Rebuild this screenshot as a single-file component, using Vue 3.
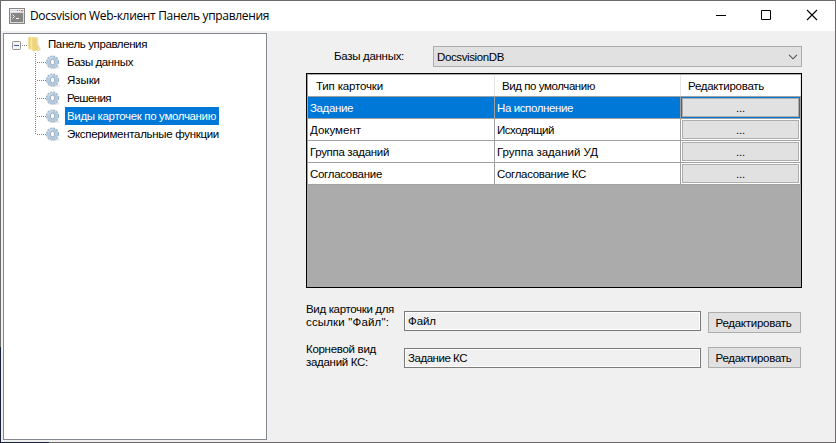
<script setup>
const nodes = [
  { text: 'Базы данных', width: 66 },
  { text: 'Языки', width: 33 },
  { text: 'Решения', width: 44 },
  { text: 'Виды карточек по умолчанию', width: 149, selected: true },
  { text: 'Экспериментальные функции', width: 152 },
]
const rows = [
  { type: 'Задание', tw: 43, view: 'На исполнение', vw: 76, selected: true },
  { type: 'Документ', tw: 51, view: 'Исходящий', vw: 57 },
  { type: 'Группа заданий', tw: 79, view: 'Группа заданий УД', vw: 101 },
  { type: 'Согласование', tw: 72, view: 'Согласование КС', vw: 89 },
]
const forms = [
  { lines: [['Вид карточки для', 88], ['ссылки "Файл":', 83]], value: 'Файл', vw: 28 },
  { lines: [['Корневой вид', 70], ['заданий КС:', 62]], value: 'Задание КС', vw: 59 },
]

// Spreads the letters of a label over its column width.
const vFit = {
  mounted(el, { value }) {
    const natural = el.getBoundingClientRect().width
    el.style.letterSpacing = (value - natural) / el.textContent.trim().length + 'px'
  },
}
</script>

<template>
  <div class="window">
    <i class="edge-left"></i><i class="edge-bottom"></i>
    <header class="titlebar">
      <svg class="app-icon" width="16" height="16" viewBox="0 0 16 16">
        <rect x=".5" y=".5" width="15" height="15" fill="#d9dadd" stroke="#858585" />
        <path d="M1 1.5h14M1 3.5h14" stroke="#f1f2f5" />
        <path d="M8 2.5h1M10 2.5h1" stroke="#7d96b7" /><path d="M12 2h2v1.5h-2z" fill="#d87b75" />
        <rect x="2" y="5" width="12" height="9" fill="#858585" />
        <path d="M3.5 6.5l2 2-2 2M7 10.5h3" fill="none" stroke="#f4f4f4" />
      </svg>
      <h1><span v-fit="239">Docsvision Web-клиент Панель управления</span></h1>
      <svg class="controls" width="105" height="14" viewBox="0 0 105 14" fill="none" stroke="#000">
        <path d="M0 7.5h10M45.5 2.5h9v9h-9z" />
        <path d="M91 2l10 10M101 2l-10 10" stroke-width="1.1" />
      </svg>
    </header>
    <div class="body">
      <nav class="tree">
        <div class="root">
          <svg width="36" height="18" viewBox="0 0 36 18">
            <defs>
              <linearGradient id="fold" x2="1"><stop stop-color="#e9c64f" /><stop offset=".6" stop-color="#f8e9a6" /><stop offset="1" stop-color="#e5c765" /></linearGradient>
            </defs>
            <rect x="4.5" y="6.5" width="8" height="8" rx="1" fill="#f5f5f5" stroke="#919191" />
            <path d="M6 10.5h5" stroke="#3f5fa8" />
            <path d="M14 10.5h6" stroke="#808080" stroke-dasharray="1 1" />
            <path d="M30 9l3 6-4 1.500z" fill="#d9d9d6" />
            <path d="M23 2h6l1 1v8l1.500 1v3l-5 1z" fill="#f3e09a" />
            <path d="M20.500 2.500l2.500-1 2.500 1.500v13l-5-2.500z" fill="url(#fold)" />
            <path d="M25.500 4l3-1.500V9l1.500 2v3.500l-4.500 2z" fill="#edd47a" />
          </svg>
          <span v-fit="99">Панель управления</span>
        </div>
        <div v-for="(n, i) in nodes" :key="n.text" class="node">
          <svg width="30" height="18" viewBox="0 0 30 18">
            <path :d="i === nodes.length - 1 ? 'M.5 0V10' : 'M.5 0V18'" stroke="#808080" stroke-dasharray="1 1" />
            <path d="M2 9.500h9" stroke="#808080" stroke-dasharray="1 1" />
            <ellipse cx="19" cy="14.500" rx="6" ry="1.500" fill="#e3e3e3" />
            <circle cx="17.500" cy="9" r="5.700" fill="none" stroke="#98b2c8" stroke-width="1.800" stroke-dasharray="2 .984" />
            <circle cx="17.500" cy="9" r="4.200" fill="none" stroke="#b3cadd" stroke-width="3" />
            <ellipse cx="17.500" cy="9" rx="2.200" ry="2.900" fill="#fff" stroke="#8da5bb" stroke-width=".9" />
            <path d="M13.500 7.500q1-3 4-3.200" fill="none" stroke="#dbe8f2" />
          </svg>
          <div class="caption" :class="{ selected: n.selected }"><span v-fit="n.width">{{ n.text }}</span></div>
        </div>
      </nav>
      <main class="panel">
        <div class="database">
          <label><span v-fit="70">Базы данных:</span></label>
          <div class="combo">
            <span v-fit="67">DocsvisionDB</span>
            <svg width="10" height="6" viewBox="0 0 10 6"><path d="M1 .8l4 4 4-4" fill="none" stroke="#555" stroke-width="1.100" /></svg>
          </div>
        </div>
        <div class="grid">
          <div class="row head">
            <div><span v-fit="67">Тип карточки</span></div>
            <div><span v-fit="93">Вид по умолчанию</span></div>
            <div><span v-fit="76">Редактировать</span></div>
          </div>
          <div v-for="r in rows" :key="r.type" class="row" :class="{ active: r.selected }">
            <div><span v-fit="r.tw">{{ r.type }}</span></div>
            <div><span v-fit="r.vw">{{ r.view }}</span></div>
            <div class="action"><button>...</button></div>
          </div>
        </div>
        <div v-for="(f, i) in forms" :key="f.value" class="form" :class="{ second: i }">
          <label><div v-for="l in f.lines" :key="l[0]"><span v-fit="l[1]">{{ l[0] }}</span></div></label>
          <div class="field"><span v-fit="f.vw">{{ f.value }}</span></div>
          <button class="edit"><span v-fit="76">Редактировать</span></button>
        </div>
      </main>
    </div>
  </div>
</template>

<style>
body { margin: 0; overflow: hidden; }
</style>

<style scoped>
* { box-sizing: border-box; }
.window { position: relative; width: 836px; height: 443px; border: 1px solid #6d6a6c; background: #f0f0f0; color: #000; font: 11.5px/18px "Liberation Sans", Arial, sans-serif; white-space: nowrap; display: flex; flex-direction: column; }
.edge-left { position: absolute; left: -1px; bottom: -1px; width: 1px; height: 96px; background: #152238; }
.edge-bottom { position: absolute; left: -1px; bottom: -1px; width: 49px; height: 1px; background: #152238; }
span { display: inline-block; }
button { font: inherit; color: inherit; padding: 0; background: #e1e1e1; border: 1px solid #adadad; }
.titlebar { height: 30px; flex: none; background: #fff; display: flex; align-items: center; padding: 0 17px 0 8px; }
.app-icon { margin-top: -1px; }
h1 { margin: 0 auto 0 5px; font: 12px/18px "Open Sans", "Noto Sans", sans-serif; }
.controls { margin: -2px -3px 0 0; }
.body { flex: 1; display: flex; padding: 2px 0 2px 2px; }
.tree { width: 264px; height: 407px; border: 1px solid #828790; background: #fff; padding: 1px 0 0 4px; }
.root, .node { display: flex; height: 18px; }
.root svg { margin-right: 4px; }
.node { padding-left: 27px; }
.caption { padding: 0 2px; }
.caption.selected { background: #0078d7; color: #fff; padding-right: 3px; }
.panel { margin-left: 39px; width: 496px; padding-top: 13px; }
.database { display: flex; height: 21px; margin-bottom: 6px; }
.database label { width: 127px; padding-left: 28px; line-height: 20px; }
.combo { width: 369px; height: 21px; border: 1px solid #adadad; background: #e1e1e1; display: flex; justify-content: space-between; align-items: center; padding: 1px 3px 0; }
.grid { height: 215px; border: 1px solid #000; background: #ababab; padding-top: 1px; }
.row { display: grid; grid-template: 21px / 188px 186px 120px; height: 22px; border-bottom: 1px solid #a0a0a0; background: #fff; line-height: 23px; }
.row > div { border-right: 1px solid #a0a0a0; padding-left: 2px; }
.row > div:first-child { border-left: 1px solid #a0a0a0; }
.row.head { line-height: 22px; }
.row.head > div { border-right-color: #e5e5e5; padding-left: 7px; }
.row.head > div:first-child { padding-left: 8px; }
.row.active { background: #0078d7; color: #fff; }
.row > .action { padding: 1px; display: flex; color: #000; }
.action button { flex: 1; line-height: 17px; padding-top: 1px; letter-spacing: -.2px; }
.form { display: flex; height: 31px; margin-top: 15px; }
.form.second { margin-top: 9px; }
.form label { width: 98px; line-height: 13px; }
.field { width: 297px; height: 20px; margin: 8px 7px 0 0; border: 1px solid #7a7a7a; box-shadow: inset 0 0 0 1px #fff; padding-left: 3px; line-height: 18px; }
.edit { width: 93px; height: 21px; margin-top: 9px; line-height: 20px; padding-right: 2px; }
.second .field { margin-top: 5px; }
.second .edit { margin-top: 4px; }
</style>
